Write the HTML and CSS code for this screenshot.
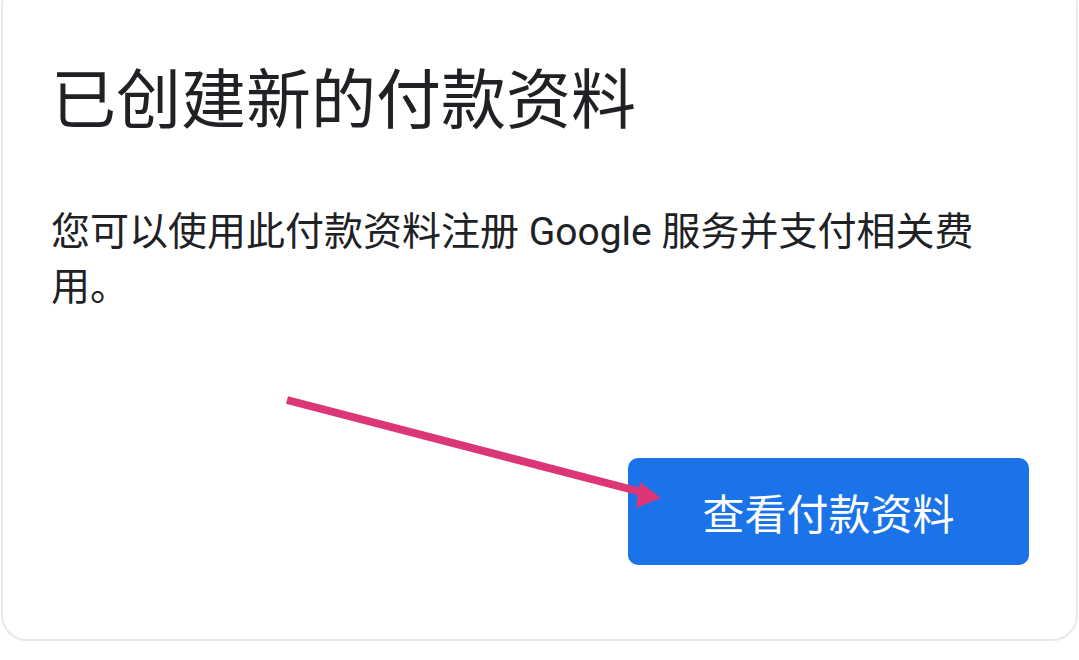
FILE: index.html
```html
<!DOCTYPE html>
<html lang="zh-CN">
<head>
    <meta charset="UTF-8">
    <meta name="viewport" content="width=device-width, initial-scale=1.0">
    <title>已创建新的付款资料</title>
    <link rel="stylesheet" href="styles.css">
</head>
<body>

    <div class="card">
        <h1 class="card-title">已创建新的付款资料</h1>
        <p class="card-text">您可以使用此付款资料注册 Google 服务并支付相关费用。</p>

        <div class="card-actions">
            <button class="btn-primary">查看付款资料</button>
        </div>

        <!-- flecha de anotación encima de la tarjeta -->
        <svg class="annotation" width="1079" height="660" viewBox="0 0 1079 660">
            <line x1="287" y1="400" x2="645" y2="493" stroke="#dc3677" stroke-width="8" />
            <polygon points="640,482 661,498 636,508" fill="#dc3677" />
        </svg>
    </div>

</body>
</html>
```

FILE: styles.css
```css
/* Tarjeta de confirmación */
body {
    margin: 0;
    background-color: #fff;
    font-family: Roboto, "Noto Sans CJK SC", sans-serif;
    color: #202124;
    overflow: hidden;
}

.card {
    position: relative;
    margin: -20px 1px 0 1px;
    height: 661px;
    box-sizing: border-box;
    border: 2px solid #ebe8eb;
    border-radius: 26px;
    padding: 0 47px 0 48px;
    background-color: #fff;
}

.card-title {
    font-size: 65px;
    font-weight: 400;
    line-height: 1.2;
    margin: 80px 0 0 0;
}

.card-text {
    font-size: 39px;
    line-height: 55px;
    margin: 65px 50px 0 0;
}

.card-actions {
    display: flex;
    justify-content: flex-end;
    margin-top: 143px;
}

.btn-primary {
    background-color: #1a73e8;
    color: #fff;
    border: none;
    border-radius: 10px;
    width: 401px;
    height: 107px;
    font-family: Roboto, "Noto Sans CJK SC", sans-serif;
    font-size: 42px;
    cursor: pointer;
}

.annotation {
    position: absolute;
    left: -3px;
    top: 18px;
    pointer-events: none;
}
```
